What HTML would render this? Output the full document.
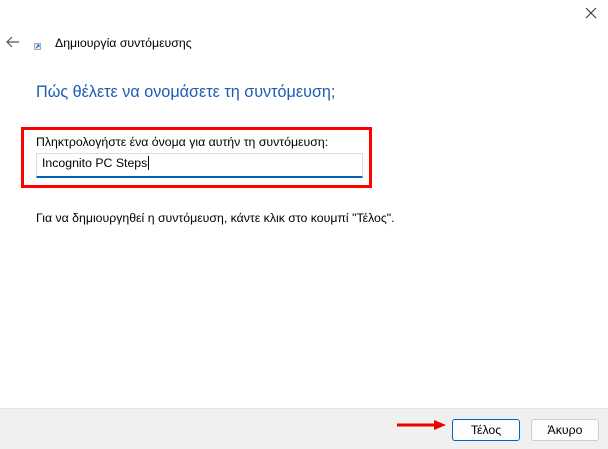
<!DOCTYPE html>
<html><head><meta charset="utf-8"><style>
body{margin:0;width:608px;height:448px;background:#fff;position:relative;overflow:hidden;font-family:"Segoe UI","Liberation Sans",sans-serif;color:#000}
.a{position:absolute;white-space:nowrap}
</style></head><body>
<svg class="a" style="left:585px;top:7px" width="12" height="12"><path d="M1 1L11 11M11 1L1 11" stroke="#333" stroke-width="1"/></svg>
<svg class="a" style="left:6px;top:36px" width="14" height="12"><path d="M13 6H1M6 1L1 6L6 11" stroke="#555" stroke-width="1.2" fill="none"/></svg>
<svg class="a" style="left:34px;top:43px" width="7" height="7"><rect x="0.5" y="0.5" width="6" height="6" fill="#e8eef6" stroke="#aab"/><path d="M2 5L5 2M3 2H5V4" stroke="#1a6fd0" stroke-width="1" fill="none"/></svg>
<div class="a" style="left:55px;top:36px;font-size:12.3px">Δημιουργία συντόμευσης</div>
<div class="a" style="left:36px;top:83px;font-size:16.2px;color:#1b5bb5">Πώς θέλετε να ονομάσετε τη συντόμευση;</div>
<div class="a" style="left:21px;top:127px;width:345px;height:55px;border:3px solid #f00"></div>
<div class="a" style="left:36px;top:135px;font-size:12.3px">Πληκτρολογήστε ένα όνομα για αυτήν τη συντόμευση:</div>
<div class="a" style="left:36px;top:153px;width:325px;height:22px;border:1px solid #ddd;border-bottom:2px solid #0063b1;background:#fff"></div>
<div class="a" style="left:42px;top:156px;font-size:12.3px">Incognito PC Steps<span style="border-left:1px solid #000;margin-left:1px"></span></div>
<div class="a" style="left:36px;top:211px;font-size:12.3px">Για να δημιουργηθεί η συντόμευση, κάντε κλικ στο κουμπί "Τέλος".</div>
<div class="a" style="left:0;top:408px;width:608px;height:40px;background:#f0f0f0;border-top:1px solid #e5e5e5"></div>
<svg class="a" style="left:396px;top:419px" width="52" height="12"><path d="M1 6H42" stroke="#e00" stroke-width="3"/><path d="M38 1L50 6L38 11Z" fill="#e00"/></svg>
<div class="a" style="left:452px;top:419px;width:66px;height:20px;border:1px solid #0067c0;border-radius:3px;background:#fdfdfd;font-size:12.3px;text-align:center;line-height:20px">Τέλος</div>
<div class="a" style="left:531px;top:419px;width:66px;height:20px;border:1px solid #ccc;border-radius:3px;background:#fdfdfd;font-size:12.3px;text-align:center;line-height:20px">Άκυρο</div>
</body></html>
